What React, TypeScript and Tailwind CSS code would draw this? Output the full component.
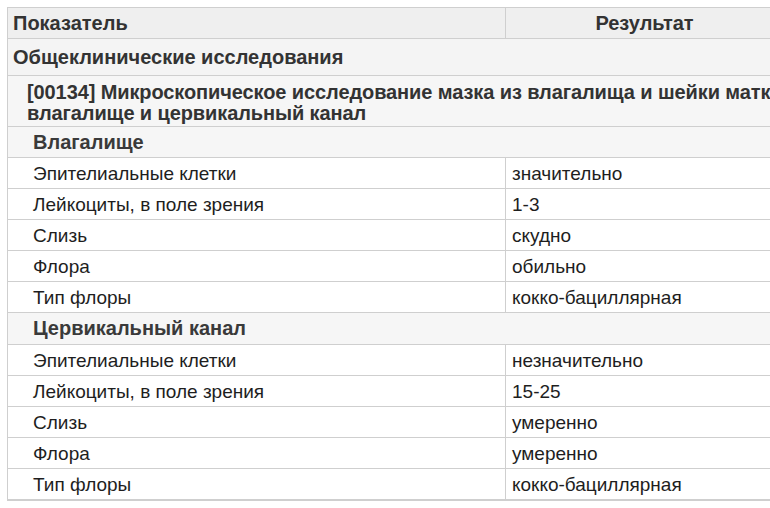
import React from 'react';

type Row = { name: string; value: string };

const vagina: Row[] = [
  { name: 'Эпителиальные клетки', value: 'значительно' },
  { name: 'Лейкоциты, в поле зрения', value: '1-3' },
  { name: 'Слизь', value: 'скудно' },
  { name: 'Флора', value: 'обильно' },
  { name: 'Тип флоры', value: 'кокко-бациллярная' },
];

const cervix: Row[] = [
  { name: 'Эпителиальные клетки', value: 'незначительно' },
  { name: 'Лейкоциты, в поле зрения', value: '15-25' },
  { name: 'Слизь', value: 'умеренно' },
  { name: 'Флора', value: 'умеренно' },
  { name: 'Тип флоры', value: 'кокко-бациллярная' },
];

function DataRow({ row }: { row: Row }) {
  return (
    <div className="flex h-[31px] border-b border-[#cfcfcf] bg-white text-[19px] text-[#1e1e1e]">
      <div className="flex w-[498px] items-center border-r border-[#cfcfcf] pl-[25px]">{row.name}</div>
      <div className="flex flex-1 items-center pl-[6px]">{row.value}</div>
    </div>
  );
}

function SubHeader({ title, h }: { title: string; h: string }) {
  return (
    <div className={`flex ${h} items-center border-b border-[#cfcfcf] bg-[#f6f6f6] pl-[25px] font-bold text-[#3a3a3a]`}>
      {title}
    </div>
  );
}

export default function App() {
  return (
    <div
      className="h-[508px] w-[770px] overflow-hidden bg-white pl-[7px] pt-[7px] text-[20px] leading-[21px]"
      style={{ fontFamily: '"Liberation Sans", Arial, sans-serif' }}
    >
      <div className="w-[777px] border border-[#cfcfcf]">
        <div className="flex h-[31px] border-b border-[#cfcfcf] bg-[#efefef] font-bold text-[#333]">
          <div className="flex w-[498px] items-center border-r border-[#cfcfcf] pl-[5px]">Показатель</div>
          <div className="flex flex-1 items-center justify-center">Результат</div>
        </div>
        <div className="flex h-[37px] items-center border-b border-[#cfcfcf] bg-[#f4f4f4] pl-[5px] font-bold text-[#333]">
          Общеклинические исследования
        </div>
        <div className="flex h-[51px] flex-col justify-center whitespace-nowrap border-b border-[#cfcfcf] bg-[#f6f6f6] pl-[19px] pt-[3px] font-bold tracking-[-0.1px] text-[#333]">
          <span>[00134] Микроскопическое исследование мазка из влагалища и шейки матки:</span>
          <span>влагалище и цервикальный канал</span>
        </div>
        <SubHeader title="Влагалище" h="h-[31px]" />
        {vagina.map((r) => (
          <DataRow key={'v' + r.name} row={r} />
        ))}
        <SubHeader title="Цервикальный канал" h="h-[32px]" />
        {cervix.map((r) => (
          <DataRow key={'c' + r.name} row={r} />
        ))}
      </div>
    </div>
  );
}
